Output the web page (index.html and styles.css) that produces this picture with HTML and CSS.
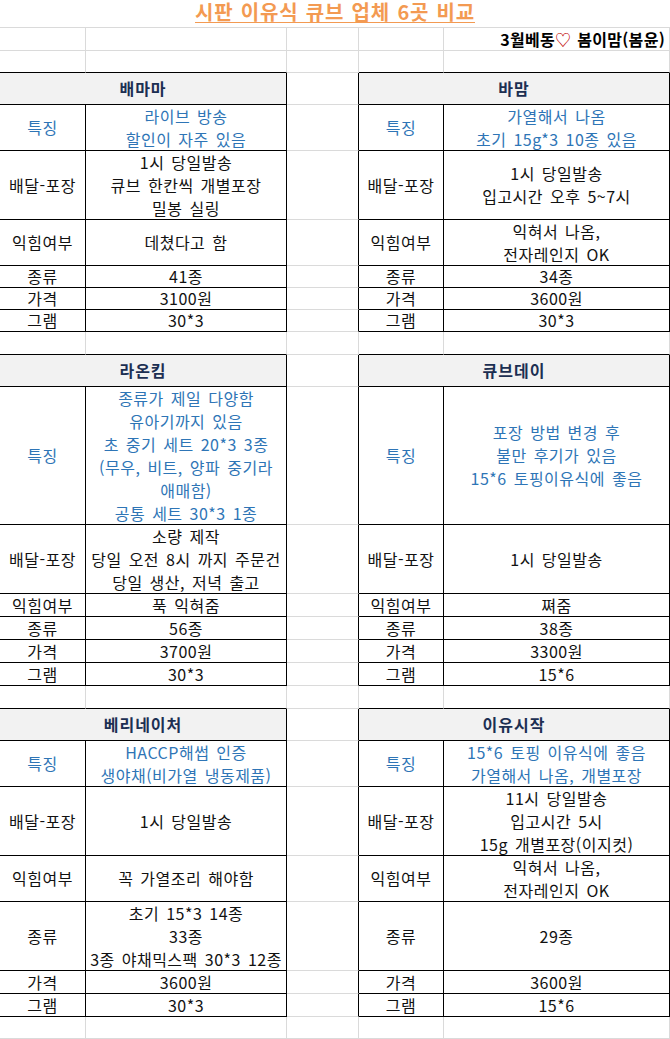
FILE: index.html
```html
<!DOCTYPE html>
<html lang="ko">
<head>
<meta charset="utf-8">
<title>시판 이유식 큐브 업체 6곳 비교</title>
<link rel="stylesheet" href="styles.css">
</head>
<body>
<div class="sheet">
  <!-- row: title -->
  <div class="c title"><span class="title-text">시판 이유식 큐브 업체 6곳 비교</span></div>
  <!-- row: author -->
  <div class="c"></div><div class="c"></div><div class="c"></div><div class="c"></div>
  <div class="c sig"><span>3월베동<span class="heart">♡</span> 봄이맘(봄윤)</span></div>
  <!-- row: blank before table -->
  <div class="c kb"></div><div class="c kb"></div><div class="c"></div><div class="c kb"></div><div class="c kb"></div>

  <!-- ===== section 1 ===== -->
  <div class="c hd kr kb">배마마</div><div class="c kr"></div><div class="c hd kr kb">바맘</div>

  <div class="c kr kb blue">특징</div>
  <div class="c kr kb blue"><span>라이브 방송</span><span>할인이 자주 있음</span></div>
  <div class="c kr"></div>
  <div class="c kr kb blue">특징</div>
  <div class="c kr kb blue"><span>가열해서 나옴</span><span>초기 15g*3 10종 있음</span></div>

  <div class="c kr kb">배달-포장</div>
  <div class="c kr kb"><span>1시 당일발송</span><span>큐브 한칸씩 개별포장</span><span>밀봉 실링</span></div>
  <div class="c kr"></div>
  <div class="c kr kb">배달-포장</div>
  <div class="c kr kb"><span>1시 당일발송</span><span>입고시간 오후 5~7시</span></div>

  <div class="c kr kb">익힘여부</div>
  <div class="c kr kb">데쳤다고 함</div>
  <div class="c kr"></div>
  <div class="c kr kb">익힘여부</div>
  <div class="c kr kb"><span>익혀서 나옴,</span><span>전자레인지 OK</span></div>

  <div class="c kr kb">종류</div><div class="c kr kb">41종</div><div class="c kr"></div>
  <div class="c kr kb">종류</div><div class="c kr kb">34종</div>

  <div class="c kr kb">가격</div><div class="c kr kb">3100원</div><div class="c kr"></div>
  <div class="c kr kb">가격</div><div class="c kr kb">3600원</div>

  <div class="c kr kb">그램</div><div class="c kr kb">30*3</div><div class="c kr"></div>
  <div class="c kr kb">그램</div><div class="c kr kb">30*3</div>

  <div class="c kb"></div><div class="c kb"></div><div class="c"></div><div class="c kb"></div><div class="c kb"></div>

  <!-- ===== section 2 ===== -->
  <div class="c hd kr kb">라온킴</div><div class="c kr"></div><div class="c hd kr kb">큐브데이</div>

  <div class="c kr kb blue">특징</div>
  <div class="c kr kb blue"><span>종류가 제일 다양함</span><span>유아기까지 있음</span><span>초 중기 세트 20*3 3종</span><span>(무우, 비트, 양파 중기라</span><span>애매함)</span><span>공통 세트 30*3 1종</span></div>
  <div class="c kr"></div>
  <div class="c kr kb blue">특징</div>
  <div class="c kr kb blue"><span>포장 방법 변경 후</span><span>불만 후기가 있음</span><span>15*6 토핑이유식에 좋음</span></div>

  <div class="c kr kb">배달-포장</div>
  <div class="c kr kb"><span>소량 제작</span><span>당일 오전 8시 까지 주문건</span><span>당일 생산, 저녁 출고</span></div>
  <div class="c kr"></div>
  <div class="c kr kb">배달-포장</div>
  <div class="c kr kb">1시 당일발송</div>

  <div class="c kr kb">익힘여부</div><div class="c kr kb">푹 익혀줌</div><div class="c kr"></div>
  <div class="c kr kb">익힘여부</div><div class="c kr kb">쪄줌</div>

  <div class="c kr kb">종류</div><div class="c kr kb">56종</div><div class="c kr"></div>
  <div class="c kr kb">종류</div><div class="c kr kb">38종</div>

  <div class="c kr kb">가격</div><div class="c kr kb">3700원</div><div class="c kr"></div>
  <div class="c kr kb">가격</div><div class="c kr kb">3300원</div>

  <div class="c kr kb">그램</div><div class="c kr kb">30*3</div><div class="c kr"></div>
  <div class="c kr kb">그램</div><div class="c kr kb">15*6</div>

  <div class="c kb"></div><div class="c kb"></div><div class="c"></div><div class="c kb"></div><div class="c kb"></div>

  <!-- ===== section 3 ===== -->
  <div class="c hd kr kb">베리네이처</div><div class="c kr"></div><div class="c hd kr kb">이유시작</div>

  <div class="c kr kb blue">특징</div>
  <div class="c kr kb blue"><span>HACCP해썹 인증</span><span>생야채(비가열 냉동제품)</span></div>
  <div class="c kr"></div>
  <div class="c kr kb blue">특징</div>
  <div class="c kr kb blue"><span>15*6 토핑 이유식에 좋음</span><span>가열해서 나옴, 개별포장</span></div>

  <div class="c kr kb">배달-포장</div>
  <div class="c kr kb">1시 당일발송</div>
  <div class="c kr"></div>
  <div class="c kr kb">배달-포장</div>
  <div class="c kr kb"><span>11시 당일발송</span><span>입고시간 5시</span><span>15g 개별포장(이지컷)</span></div>

  <div class="c kr kb">익힘여부</div>
  <div class="c kr kb">꼭 가열조리 해야함</div>
  <div class="c kr"></div>
  <div class="c kr kb">익힘여부</div>
  <div class="c kr kb"><span>익혀서 나옴,</span><span>전자레인지 OK</span></div>

  <div class="c kr kb">종류</div>
  <div class="c kr kb"><span>초기 15*3 14종</span><span>33종</span><span>3종 야채믹스팩 30*3 12종</span></div>
  <div class="c kr"></div>
  <div class="c kr kb">종류</div>
  <div class="c kr kb">29종</div>

  <div class="c kr kb">가격</div><div class="c kr kb">3600원</div><div class="c kr"></div>
  <div class="c kr kb">가격</div><div class="c kr kb">3600원</div>

  <div class="c kr kb">그램</div><div class="c kr kb">30*3</div><div class="c kr"></div>
  <div class="c kr kb">그램</div><div class="c kr kb">15*6</div>

  <div class="c"></div><div class="c"></div><div class="c"></div><div class="c"></div><div class="c"></div>
</div>
</body>
</html>
```

FILE: styles.css
```css
* {
  box-sizing: border-box;
}

html, body {
  margin: 0;
  padding: 0;
  background: #ffffff;
}

body {
  font-family: "Noto Sans CJK KR", "Noto Sans", sans-serif;
  font-size: 16px;
  color: #111111;
  overflow: hidden;
}

.sheet {
  display: grid;
  width: 670px;
  grid-template-columns: 86px 201px 72px 85px 226px;
  grid-template-rows:
    28px 23px 22px
    32px 46px 69px 46px 22px 22px 22px 23px
    32px 138px 69px 23px 23px 23px 23px 23px
    32px 46px 69px 46px 69px 23px 23px 22px;
}

.c {
  display: flex;
  flex-direction: column;
  align-items: center;
  justify-content: center;
  border-right: 1px solid #dadada;
  border-bottom: 1px solid #dadada;
  line-height: 23px;
  white-space: nowrap;
  text-align: center;
  letter-spacing: 0.5px;
  word-spacing: 2px;
  min-height: 0;
}

.kr {
  border-right-color: #000000;
}

.kb {
  border-bottom-color: #000000;
}

.blue {
  color: #2e75b6;
}

.title {
  grid-column: 1 / span 5;
  justify-content: flex-start;
  border-right: none;
}

.title-text {
  font-size: 20px;
  line-height: 24px;
  font-weight: 700;
  color: #f39a52;
  text-decoration: underline;
  text-decoration-thickness: 1px;
  text-underline-offset: 2px;
  letter-spacing: 0.8px;
  word-spacing: 1px;
}

.sig {
  align-items: flex-end;
  padding-right: 4px;
  font-weight: 700;
  color: #000000;
  letter-spacing: 0.3px;
  word-spacing: 1px;
}

.heart {
  color: #c00000;
  font-weight: 400;
}

.hd {
  grid-column: span 2;
  background: #f2f2f2;
  font-weight: 700;
  color: #1c2f52;
  font-size: 16px;
  letter-spacing: 1px;
}
```
